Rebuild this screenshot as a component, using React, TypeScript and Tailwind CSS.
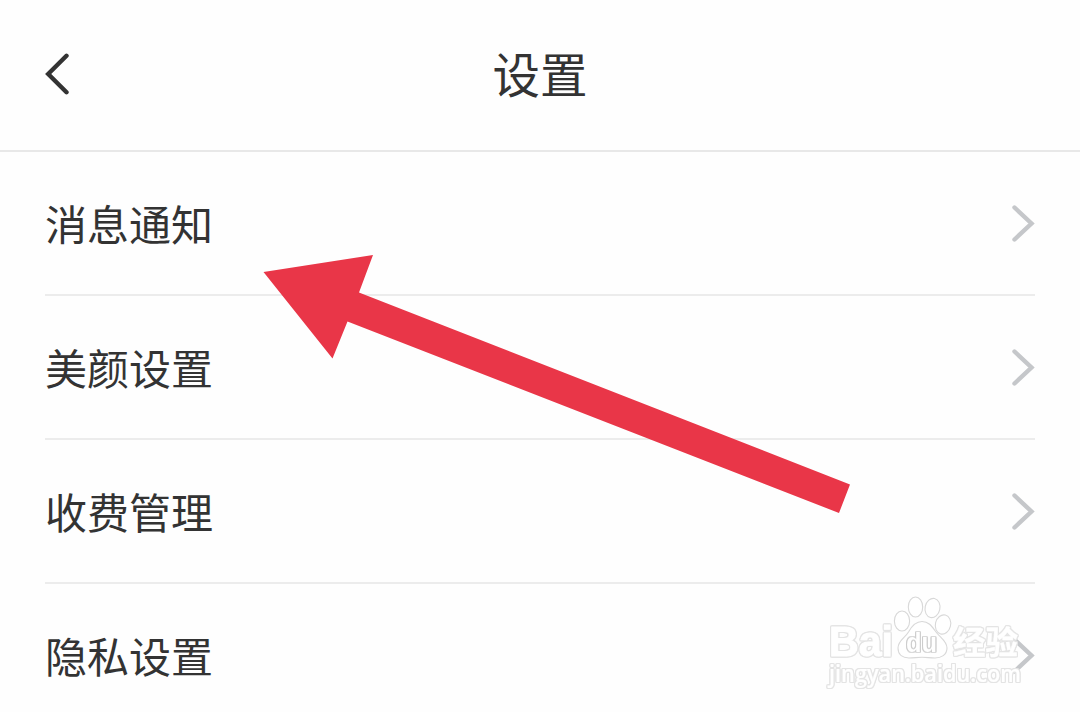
const items = [
    { name: '消息通知' },
    { name: '美颜设置' },
    { name: '收费管理' },
    { name: '隐私设置' },
]

function Watermark() {
    return (
        <svg aria-hidden="true" viewBox="0 0 220 104" className="absolute left-[820px] top-[590px] h-[104px] w-[220px]" fill="#ffffff" stroke="#d8d8d8" strokeWidth="1.1" strokeLinejoin="round">
            {/* White lettering with a thin grey contour */}
            <g stroke="#ffffff" className="[filter:drop-shadow(1px_0_0_#e4e4e4)_drop-shadow(-1px_0_0_#e4e4e4)_drop-shadow(0_1px_0_#e4e4e4)_drop-shadow(0_-1px_0_#e4e4e4)]">
                <text x="9" y="65.500" fontSize="43" fontWeight="700" textLength="64" lengthAdjust="spacingAndGlyphs" strokeWidth="1" className="font-['Liberation_Sans',sans-serif]">Bai</text>
                <text x="133" y="64" fontSize="32" fontWeight="700" textLength="65" lengthAdjust="spacingAndGlyphs" strokeWidth="0.4" className="font-['Noto_Sans_CJK_SC',sans-serif]">经验</text>
                <text x="9" y="92" fontSize="22.500" fontWeight="600" textLength="192" lengthAdjust="spacingAndGlyphs" strokeWidth="0.2" className="font-['Open_Sans',sans-serif]">jingyan.baidu.com</text>
            </g>

            <ellipse cx="82" cy="31" rx="7.6" ry="10" />
            <ellipse cx="95.500" cy="17" rx="7.2" ry="10" />
            <ellipse cx="112.500" cy="18" rx="7.4" ry="9.7" transform="rotate(12 112.500 18)" />
            <ellipse cx="123" cy="34.500" rx="7.6" ry="9.7" transform="rotate(14 123 34.500)" />
            <path d="M102 31.500c-7 0-10.500 5-13.500 10.500-3.500 6-10.500 8.500-10.500 16 0 7 5 10 11 10 5 0 8-.8 13-.8s8 .8 13 .8c6 0 12-3 12-10 0-7-7-10.500-11-16-4-5.500-7-10.500-14-10.500z" />

            <g stroke="none" className="[filter:drop-shadow(1px_0_0_#cccccc)_drop-shadow(-1px_0_0_#cccccc)_drop-shadow(0_1px_0_#dadada)_drop-shadow(0_-1px_0_#dadada)]">
                <text x="86" y="62" fontSize="28" fontWeight="700" textLength="31" lengthAdjust="spacingAndGlyphs" className="font-['Liberation_Sans',sans-serif]">du</text>
            </g>
        </svg>
    )
}

export default function App() {
    return (
        <div className="relative h-[712px] w-[1080px] overflow-hidden bg-[#fefefe] font-['Noto_Sans_CJK_SC',sans-serif] text-[#333333]">
            <header className="grid h-[152px] grid-cols-[1fr_auto_1fr] items-center border-b-2 border-[#e8e8e8] px-[45px]">
                <button type="button" aria-label="返回" className="w-6 pb-0.5">
                    <svg viewBox="0 0 24 42" className="h-[42px] w-6" fill="none" stroke="#333333" strokeWidth="4.400" strokeLinecap="round" strokeLinejoin="miter">
                        <path d="M21.500 2.800 3.200 21l18.300 18.200" />
                    </svg>
                </button>
                <h1 className="pb-1 text-[47.5px] leading-[72px]">设置</h1>
            </header>

            <main className="px-[45px]">
                {items.map((item) => (
                    <a key={item.name} href="#" className="flex h-36 items-center justify-between border-b-2 border-[#ececec]">
                        <span className="text-[42px] leading-[60px]">{item.name}</span>
                        <svg aria-hidden="true" viewBox="0 0 24 38" className="h-[38px] w-6" fill="none" stroke="#c5c7ca" strokeWidth="4.400" strokeLinecap="round">
                            <path d="M3.500 3.500 20.500 19.500 3.500 35.500" />
                        </svg>
                    </a>
                ))}
            </main>

            {/* Pointer to the first row */}
            <svg aria-hidden="true" viewBox="0 0 1080 712" className="absolute inset-0 h-full w-full" fill="#e93648">
                <path d="M263.500 272 373 255 359 292.500 850 484.500 839 513 347.500 321.500 332.500 358.500z" />
            </svg>

            <Watermark />
        </div>
    )
}
